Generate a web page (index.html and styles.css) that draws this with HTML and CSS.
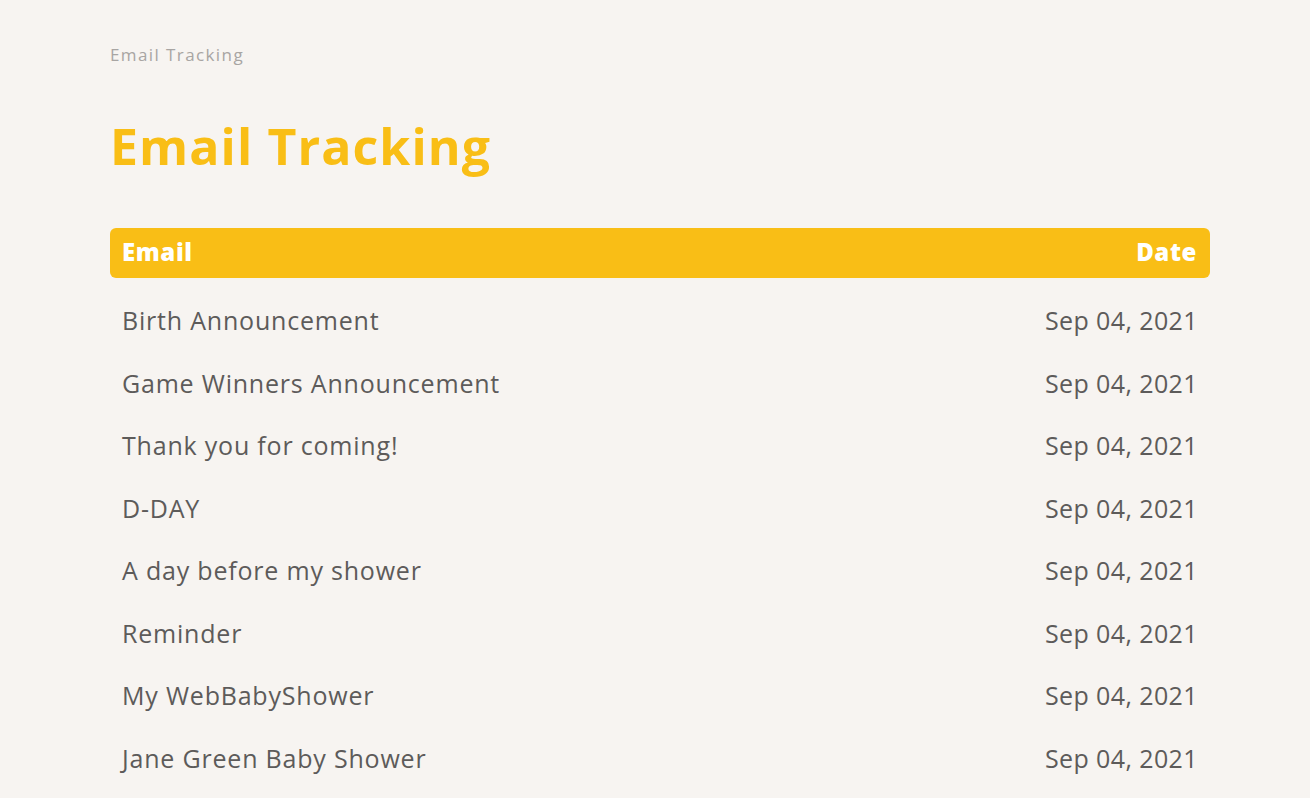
FILE: index.html
```html
<!DOCTYPE html>
<html lang="en">
<head>
<meta charset="utf-8">
<title>Email Tracking</title>
<link rel="stylesheet" href="styles.css">
</head>
<body>
<main class="page">
  <div class="breadcrumb">Email Tracking</div>
  <h1 class="title">Email Tracking</h1>
  <table class="table">
    <thead>
      <tr><th class="col-email">Email</th><th class="col-date">Date</th></tr>
    </thead>
    <tbody>
      <tr><td>Birth Announcement</td><td class="col-date">Sep 04, 2021</td></tr>
      <tr><td>Game Winners Announcement</td><td class="col-date">Sep 04, 2021</td></tr>
      <tr><td>Thank you for coming!</td><td class="col-date">Sep 04, 2021</td></tr>
      <tr><td>D-DAY</td><td class="col-date">Sep 04, 2021</td></tr>
      <tr><td>A day before my shower</td><td class="col-date">Sep 04, 2021</td></tr>
      <tr><td>Reminder</td><td class="col-date">Sep 04, 2021</td></tr>
      <tr><td>My WebBabyShower</td><td class="col-date">Sep 04, 2021</td></tr>
      <tr><td>Jane Green Baby Shower</td><td class="col-date">Sep 04, 2021</td></tr>
    </tbody>
  </table>
</main>
</body>
</html>
```
FILE: styles.css
```css
html, body {
  margin: 0;
  padding: 0;
  background: #f7f4f1;
  font-family: "Open Sans", "Liberation Sans", sans-serif;
  overflow: hidden;
}
.page {
  width: 1100px;
  margin: 0 0 0 110px;
  padding-top: 43px;
}
.breadcrumb {
  font-size: 17px;
  line-height: 24px;
  color: #a8a5a3;
  letter-spacing: 1.4px;
}
.title {
  margin: 47px 0 0 0;
  font-size: 50px;
  line-height: 64px;
  font-weight: 700;
  color: #f9be16;
  letter-spacing: 1.1px;
}
.table {
  margin-top: 50px;
  width: 100%;
  border-collapse: separate;
  border-spacing: 0;
}
.table th {
  background: #f9be16;
  color: #ffffff;
  font-size: 24px;
  font-weight: 800;
  letter-spacing: 0.6px;
  height: 50px;
  padding: 0 13px 3px 12px;
  box-sizing: border-box;
  text-align: left;
}
.table th.col-email { border-radius: 6px 0 0 6px; }
.table th.col-date { border-radius: 0 6px 6px 0; text-align: right; }
.table td {
  font-size: 25px;
  letter-spacing: 0.8px;
  color: #5d5b5a;
  height: 62.5px;
  padding: 0 12px 0 12px;
  vertical-align: middle;
}
.table tbody tr:first-child td { padding-top: 11px; }
.table td.col-date { text-align: right; letter-spacing: 0.4px; }
```
